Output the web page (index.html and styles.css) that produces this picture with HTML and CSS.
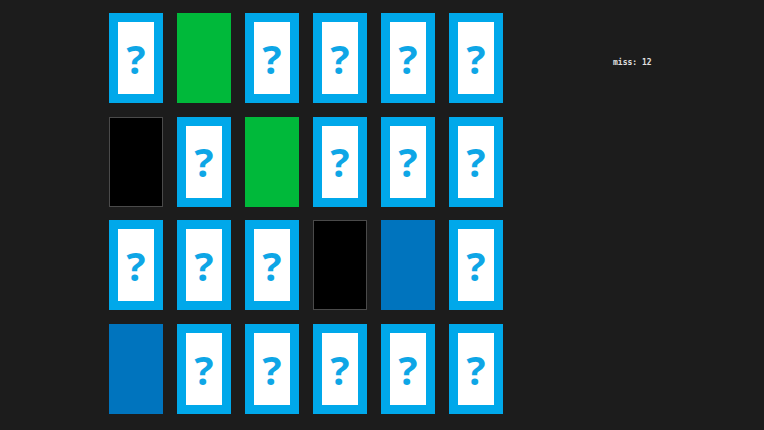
FILE: index.html
```html
<!DOCTYPE html>
<html>
<head>
<meta charset="utf-8">
<link rel="stylesheet" href="styles.css">
</head>
<body>
<div class="page">
  <div class="grid">
    <div class="card back"><span>?</span></div>
    <div class="card green"></div>
    <div class="card back"><span>?</span></div>
    <div class="card back"><span>?</span></div>
    <div class="card back"><span>?</span></div>
    <div class="card back"><span>?</span></div>

    <div class="card black"></div>
    <div class="card back"><span>?</span></div>
    <div class="card green"></div>
    <div class="card back"><span>?</span></div>
    <div class="card back"><span>?</span></div>
    <div class="card back"><span>?</span></div>

    <div class="card back"><span>?</span></div>
    <div class="card back"><span>?</span></div>
    <div class="card back"><span>?</span></div>
    <div class="card black"></div>
    <div class="card blue"></div>
    <div class="card back"><span>?</span></div>

    <div class="card blue"></div>
    <div class="card back"><span>?</span></div>
    <div class="card back"><span>?</span></div>
    <div class="card back"><span>?</span></div>
    <div class="card back"><span>?</span></div>
    <div class="card back"><span>?</span></div>
  </div>
  <div class="miss">miss: 12</div>
</div>
</body>
</html>
```
FILE: styles.css
```css
html, body {
  margin: 0;
  padding: 0;
  background: #1c1c1c;
  width: 764px;
  height: 430px;
  overflow: hidden;
}
.page {
  display: flex;
  align-items: flex-start;
  padding: 13px 0 0 109px;
}
.grid {
  display: grid;
  grid-template-columns: repeat(6, 54px);
  grid-auto-rows: 90px;
  column-gap: 14px;
  row-gap: 13.7px;
}
.card {
  box-sizing: border-box;
  width: 54px;
  height: 90px;
}
.back {
  border: 9px solid #00a8ea;
  background: #ffffff;
  display: flex;
  align-items: center;
  justify-content: center;
}
.back span {
  font-family: "Open Sans", "DejaVu Sans", sans-serif;
  font-weight: 700;
  font-size: 40px;
  line-height: 1;
  color: #0ea6e6;
  margin-top: 1px;
}
.green { background: #00b93a; }
.blue { background: #0074be; }
.black { background: #000; border: 1px solid #4a4a4a; }
.miss {
  margin: 45px 0 0 110px;
  font-family: "DejaVu Sans Mono", monospace;
  font-weight: 700;
  font-size: 8px;
  color: #e0e0e0;
  white-space: pre;
}
```
